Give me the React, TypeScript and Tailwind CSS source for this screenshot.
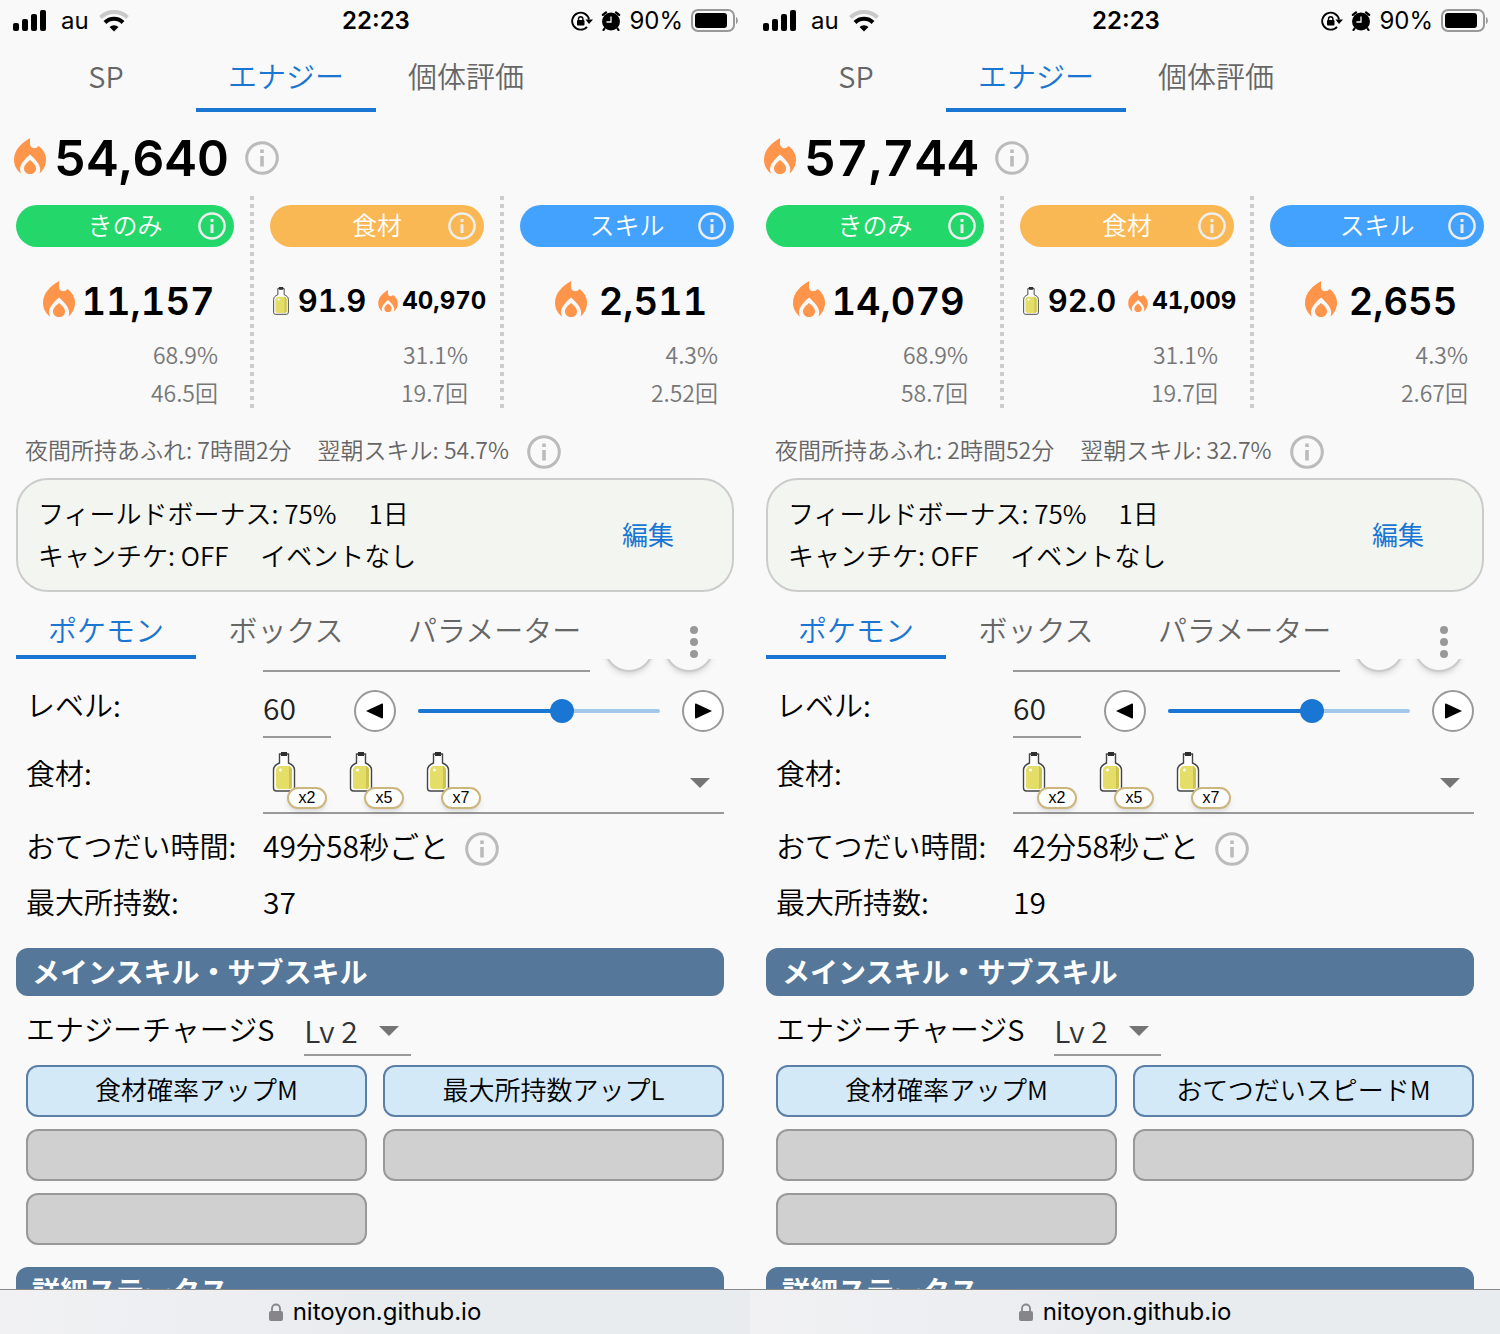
import { useState } from 'react'
import type { ReactNode } from 'react'

type Stat = {
  label: string
  color: string
  gap: string
  value: string
  percent: string
  count: string
  energy?: string
}

type Result = {
  id: string
  total: string
  stats: Stat[]
  night: string
  morning: string
  frequency: string
  capacity: string
  subSkills: string[]
}

const results: Result[] = [
  {
    id: 'left',
    total: '54,640',
    stats: [
      { label: 'きのみ', color: 'bg-[#24d76a]', gap: 'gap-1.5', value: '11,157', percent: '68.9%', count: '46.5回' },
      { label: '食材', color: 'bg-[#fab855]', gap: '', value: '91.9', energy: '40,970', percent: '31.1%', count: '19.7回' },
      { label: 'スキル', color: 'bg-[#44a2ff]', gap: 'gap-3', value: '2,511', percent: '4.3%', count: '2.52回' },
    ],
    night: '7時間2分',
    morning: '54.7%',
    frequency: '49分58秒ごと',
    capacity: '37',
    subSkills: ['食材確率アップM', '最大所持数アップL', '', '', ''],
  },
  {
    id: 'right',
    total: '57,744',
    stats: [
      { label: 'きのみ', color: 'bg-[#24d76a]', gap: 'gap-1.5', value: '14,079', percent: '68.9%', count: '58.7回' },
      { label: '食材', color: 'bg-[#fab855]', gap: '', value: '92.0', energy: '41,009', percent: '31.1%', count: '19.7回' },
      { label: 'スキル', color: 'bg-[#44a2ff]', gap: 'gap-3', value: '2,655', percent: '4.3%', count: '2.67回' },
    ],
    night: '2時間52分',
    morning: '32.7%',
    frequency: '42分58秒ごと',
    capacity: '19',
    subSkills: ['食材確率アップM', 'おてつだいスピードM', '', '', ''],
  },
]

const Flame = ({ className }: { className: string }) => (
  <svg viewBox="0 0 32 36" className={className} fill="#ff944b" aria-hidden="true">
    <path d="M16 0C16 4 15.800 6 16.500 8c1.500 2.800 5.500 3.200 8 0C29 11.500 32 16 32 21.500c0 6-2.500 10.500-6.500 14C28.500 28 22 22 16 16.500 10 22 3.500 28 7 35.500 2.500 32 0 27.500 0 21.500 0 11.500 8 5 16 0Z" />
    <path d="M16 22c3 2.500 6 5 6 8.500 0 3.500-2.700 5.500-6 5.500s-6-2-6-5.500C10 27 13 24.500 16 22Z" />
  </svg>
)

const Bottle = ({ className }: { className: string }) => (
  <svg viewBox="0 0 24 40" className={className} aria-hidden="true">
    <path d="M7.500 2v9C4 12.500 1.500 14 1.500 18v18c0 2 1 3 3 3h15c2 0 3-1 3-3V18c0-4-2.500-5.500-6-7V2Z" fill="#fff" stroke="#444" strokeWidth="1.400" />
    <path d="M7 14h10c2 1 3 2 3 4v16c0 2-1 3-3 3H7c-2 0-3-1-3-3V18c0-2 1-3 3-4Z" fill="#e4de68" />
    <path d="M17 14c2 1 3 2 3 4v16c0 2-1 3-3 3Z" fill="#cdc452" />
    <path d="M9 0h6v4H9Z" fill="#2f2f2f" />
    <circle cx="8.500" cy="18" r="1.500" fill="#fff" />
  </svg>
)

const InfoButton = ({ className }: { className: string }) => (
  <button type="button" aria-label="info" className={className}>
    <svg viewBox="0 0 34 34" className="size-full" fill="none" stroke="currentColor">
      <circle cx="17" cy="17" r="15.300" strokeWidth="3" />
      <path d="M17 15v10.500M17 8.500v3.500" strokeWidth="3.600" />
    </svg>
  </button>
)

const Caret = () => (
  <svg viewBox="0 0 20 10" className="h-[10px] w-5 shrink-0" fill="#757575" aria-hidden="true">
    <path d="M0 0h20L10 10Z" />
  </svg>
)

const StatusBar = () => (
  <div className="grid h-10 grid-cols-3 items-center pt-0.5 pr-[11px] pl-[13px] font-['Inter',sans-serif] text-2xl font-normal text-black">
    <div className="flex items-center gap-[10px]">
      <svg viewBox="0 0 34 22" className="h-[22px] w-[34px]" aria-hidden="true">
        <rect x="0" y="13" width="6" height="8" rx="2" />
        <rect x="9" y="9" width="6" height="12" rx="2" />
        <rect x="18" y="4" width="6" height="17" rx="2" />
        <rect x="27" y="0" width="6" height="21" rx="2" />
      </svg>
      <span className="pl-1">au</span>
      <svg viewBox="0 0 30 22" className="h-[22px] w-[30px]" fill="none" aria-hidden="true">
        <path d="M1.500 7.500a19.500 19.500 0 0 1 27 0" stroke="#c9c9c9" strokeWidth="4" />
        <path d="M6 12.500a12.500 12.500 0 0 1 18 0" stroke="#000" strokeWidth="4" />
        <path d="M10.500 17a7 7 0 0 1 9 0L15 21.500Z" fill="#000" />
      </svg>
    </div>
    <time className="text-center font-semibold">22:23</time>
    <div className="flex items-center justify-end gap-2">
      <svg viewBox="0 0 22 20" className="h-5 w-[22px]" fill="none" stroke="#000" aria-hidden="true">
        <path d="M16 15.800A8.500 8.500 0 1 1 18 8.500" strokeWidth="1.900" />
        <path d="M14.500 8.500h7.500L18 13Z" fill="#000" stroke="none" />
        <rect x="6" y="9" width="7.500" height="5.500" rx="1" fill="#000" stroke="none" />
        <path d="M7.500 9.500V8a2.200 2.200 0 0 1 4.400 0v1.500" strokeWidth="1.400" />
      </svg>
      <svg viewBox="0 0 20 20" className="size-5" aria-hidden="true">
        <circle cx="10" cy="10.500" r="9" />
        <path d="M1.800 3.800 5 1.500M18.200 3.800 15 1.500M3.500 17.500l-1 1.500M16.500 17.500l1 1.500" stroke="#000" strokeWidth="2.200" strokeLinecap="round" />
        <path d="M10 5.500V11H5.500" fill="none" stroke="#f9f9f9" strokeWidth="1.300" />
      </svg>
      <span>90%</span>
      <svg viewBox="0 0 48 24" className="h-6 w-12" fill="none" aria-hidden="true">
        <rect x="1" y="1" width="42" height="21" rx="6" stroke="#999" strokeWidth="2" />
        <rect x="4" y="4" width="32" height="15" rx="3" fill="#000" />
        <path d="M45 8c2.500 1 2.500 6 0 7Z" fill="#999" />
      </svg>
    </div>
  </div>
)

const Tab = ({ active, onClick, children }: { active: boolean; onClick: () => void; children: ReactNode }) => (
  <button
    type="button"
    role="tab"
    aria-selected={active}
    onClick={onClick}
    className={
      active
        ? 'min-w-[180px] border-b-4 border-[#1976d2] px-8 pt-1 text-[#1976d2]'
        : 'min-w-[180px] border-b-4 border-transparent px-8 pt-1 text-[#666]'
    }
  >
    {children}
  </button>
)

const StatColumn = ({ stat }: { stat: Stat }) => (
  <div className="flex min-w-0 flex-1 basis-0">
    {stat.label !== 'きのみ' && (
      <div className="w-1 shrink-0 bg-[repeating-linear-gradient(#ccc_0_4px,transparent_4px_8px)]" />
    )}
    <div className="min-w-0 flex-1 px-4 pt-[9px]">
      <div className={`flex h-[42px] items-center rounded-full text-[25px] text-white ${stat.color}`}>
        <span className="flex-1 pb-0.5 pl-9 text-center">{stat.label}</span>
        <InfoButton className="mr-2 size-7 text-[#eee]" />
      </div>
      {stat.energy ? (
        <div className="mt-5 flex h-[68px] items-center justify-center pl-1 font-['Inter',sans-serif] font-semibold text-black tabular-nums">
          <Bottle className="h-7 w-[18px] shrink-0" />
          <span className="ml-2 text-[31px]">{stat.value}</span>
          <Flame className="ml-3 h-[22px] w-5 shrink-0" />
          <span className="ml-1 text-2xl font-bold">{stat.energy}</span>
        </div>
      ) : (
        <div className={`mt-5 flex h-[68px] items-center justify-center pl-2 font-['Inter',sans-serif] text-[38px] font-semibold text-black tabular-nums ${stat.gap}`}>
          <Flame className="mb-1 h-9 w-8 shrink-0" />
          <span>{stat.value}</span>
        </div>
      )}
      <div className="pr-4 text-right text-[23px] leading-[38px] text-[#777]">
        <p>{stat.percent}</p>
        <p>{stat.count}</p>
      </div>
    </div>
  </div>
)

const Phone = ({ result }: { result: Result }) => {
  const [page, setPage] = useState('エナジー')
  const [tab, setTab] = useState('ポケモン')
  const [level, setLevel] = useState(60)
  const percent = ((level - 1) / 99) * 100

  const changeLevel = (value: number) => {
    if (value >= 1 && value <= 100) {
      setLevel(value)
    }
  }

  return (
    <section className="flex h-full min-w-0 flex-col overflow-hidden bg-[#f9f9f9]">
      <StatusBar />

      <div role="tablist" className="flex h-[72px] px-4 text-[29px]">
        {['SP', 'エナジー', '個体評価'].map((name) => (
          <Tab key={name} active={page === name} onClick={() => setPage(name)}>{name}</Tab>
        ))}
      </div>

      <div className="flex h-[84px] items-center px-[14px] pt-2">
        <Flame className="mb-1 h-9 w-8" />
        <span className="ml-2 font-['Inter',sans-serif] text-[50px] font-semibold text-black tabular-nums">{result.total}</span>
        <InfoButton className="ml-4 size-[34px] text-[#bbb]" />
      </div>

      <div className="flex h-[214px]">
        {result.stats.map((stat) => (
          <StatColumn key={stat.label} stat={stat} />
        ))}
      </div>

      <div className="mt-[18px] mb-0.5 flex h-12 items-center px-[25px] text-[23px] text-[#666]">
        <span className="pb-1.5">夜間所持あふれ: {result.night}</span>
        <span className="ml-[26px] pb-1.5">翌朝スキル: {result.morning}</span>
        <InfoButton className="ml-[18px] size-[34px] text-[#bbb]" />
      </div>

      <div className="mx-4 flex items-center justify-between rounded-4xl border-2 border-[#ccc] bg-[#f3f5f0] pt-3 pr-[58px] pb-[14px] pl-5 text-[26px] leading-[42px] text-black">
        <div>
          <p>フィールドボーナス: 75%<span className="ml-8">1日</span></p>
          <p>キャンチケ: OFF<span className="ml-8">イベントなし</span></p>
        </div>
        <button type="button" className="font-normal text-[#1976d2]">編集</button>
      </div>

      <div className="mt-2 flex h-[59px] items-stretch justify-between pr-[52px] pl-4">
        <div role="tablist" className="flex text-[29px]">
          {['ポケモン', 'ボックス', 'パラメーター'].map((name) => (
            <Tab key={name} active={tab === name} onClick={() => setTab(name)}>{name}</Tab>
          ))}
        </div>
        <button type="button" aria-label="menu" className="self-end">
          <svg viewBox="0 0 8 34" className="h-[34px] w-2" fill="#999">
            <circle cx="4" cy="5" r="4" />
            <circle cx="4" cy="17" r="4" />
            <circle cx="4" cy="29" r="4" />
          </svg>
        </button>
      </div>

      {/* scrolled list */}
      <div className="min-h-0 flex-1 overflow-hidden text-[29px] text-black">
        <div className="flex h-[13px] items-end pr-[36px] pl-[263px]">
          <div className="mr-[14px] h-10 flex-1 border-b-2 border-[#999]" />
          <button type="button" aria-label="search" className="mr-[10px] size-[50px] shrink-0 rounded-full border-2 border-[#ccc] bg-[#f9f9f9] shadow-md" />
          <button type="button" aria-label="edit" className="size-[50px] shrink-0 rounded-full border-2 border-[#ccc] bg-[#f9f9f9] shadow-md" />
        </div>

        <div className="flex h-[66px] px-[26px]">
          <label htmlFor={`level-${result.id}`} className="flex w-[237px] shrink-0 items-center">レベル:</label>
          <input
            id={`level-${result.id}`}
            type="text"
            value={level}
            onChange={(e) => changeLevel(Number(e.target.value))}
            className="w-[68px] border-b-2 border-[#999] pt-1.5 text-[30px] text-[#222] outline-none"
          />
          <div className="ml-[23px] flex min-w-0 flex-1 items-center pt-3">
            <button
              type="button"
              aria-label="level down"
              onClick={() => changeLevel(level - 1)}
              className="flex size-[42px] shrink-0 items-center justify-center rounded-full border-2 border-[#999] bg-white"
            >
              <svg viewBox="0 0 18 16" className="h-4 w-[18px]"><path d="M0 8 16 .5q1-.3 1 1v13q0 1.300-1 1Z" /></svg>
            </button>
            <div className="relative mx-[22px] h-1 flex-1 rounded-full bg-[#a4c7ec]">
              <div className="h-1 rounded-full bg-[#1976d2]" style={{ width: `${percent}%` }} />
              <input
                type="range"
                aria-label="レベル"
                min={1}
                max={100}
                value={level}
                onChange={(e) => changeLevel(Number(e.target.value))}
                className="absolute -inset-x-3 -top-[10px] h-6 appearance-none bg-transparent [&::-webkit-slider-thumb]:size-6 [&::-webkit-slider-thumb]:appearance-none [&::-webkit-slider-thumb]:rounded-full [&::-webkit-slider-thumb]:bg-[#1976d2]"
              />
            </div>
            <button
              type="button"
              aria-label="level up"
              onClick={() => changeLevel(level + 1)}
              className="flex size-[42px] shrink-0 items-center justify-center rounded-full border-2 border-[#999] bg-white"
            >
              <svg viewBox="0 0 18 16" className="h-4 w-[18px]"><path d="M18 8 2 .5q-1-.3-1 1v13q0 1.300 1 1Z" /></svg>
            </button>
          </div>
        </div>

        <div className="flex h-[76px] px-[26px]">
          <span className="flex w-[237px] shrink-0 items-center pb-1.5">食材:</span>
          <button type="button" aria-haspopup="listbox" aria-label="食材" className="flex flex-1 items-end justify-between border-b-2 border-[#999] pr-[14px] pl-[9px]">
            <span className="flex gap-[53px]">
              {['x2', 'x5', 'x7'].map((amount) => (
                <span key={amount} className="relative h-[60px]">
                  <Bottle className="h-10 w-6" />
                  <span className="absolute top-[35px] left-[15px] flex h-[22px] w-10 items-center justify-center rounded-full border-2 border-[#cbb67d] bg-white font-['Liberation_Sans',sans-serif] text-base font-normal shadow-md">
                    {amount}
                  </span>
                </span>
              ))}
            </span>
            <span className="flex h-[34px] items-start"><Caret /></span>
          </button>
        </div>

        <dl>
          <div className="flex h-[66px] items-center px-[26px]">
            <dt className="w-[237px] pb-0.5">おてつだい時間:</dt>
            <dd className="flex items-center text-[30px]">
              <span className="pb-1">{result.frequency}</span>
              <InfoButton className="mt-1 ml-4 size-[34px] text-[#bbb]" />
            </dd>
          </div>
          <div className="flex h-[46px] items-center px-[26px]">
            <dt className="w-[237px] pb-0.5">最大所持数:</dt>
            <dd className="pb-1 text-[30px]">{result.capacity}</dd>
          </div>
        </dl>

        <h2 className="mt-[22px] mr-[26px] ml-4 flex h-12 items-center rounded-xl bg-[#579] px-4 pb-0.5 text-[28px] font-bold text-white">メインスキル・サブスキル</h2>

        <div className="flex h-[60px] px-[26px]">
          <label htmlFor={`skill-${result.id}`} className="flex items-center pt-1.5">エナジーチャージS</label>
          <div className="ml-[30px] flex w-[107px] items-center border-b-2 border-[#999] pt-3 pr-3">
            <select id={`skill-${result.id}`} className="min-w-0 flex-1 appearance-none pb-0.5 text-[30px] text-[#333] outline-none">
              <option>Lv 2</option>
            </select>
            <Caret />
          </div>
        </div>

        <div className="mx-[26px] mt-[9px] grid grid-cols-2 gap-x-4 gap-y-3">
          {result.subSkills.map((skill, i) => (
            <button
              key={i}
              type="button"
              aria-label={skill || 'empty'}
              className={
                skill
                  ? 'h-[52px] rounded-xl border-2 border-[#5b7fa6] bg-[#d4e9f8] pb-1.5 text-[26px]'
                  : 'h-[52px] rounded-xl border-2 border-[#999] bg-[#d0d0d0]'
              }
            >
              {skill}
            </button>
          ))}
        </div>

        <h2 className="mt-[22px] mr-[26px] ml-4 flex h-12 items-center rounded-xl bg-[#579] px-4 pb-0.5 text-[28px] font-bold text-white">詳細ステータス</h2>
      </div>

      <footer className="flex h-[45px] items-center justify-center gap-[10px] border-t border-[#888] bg-linear-to-r from-[#f1f1f3] via-[#e9ecef] to-[#e9ecef] font-['Inter',sans-serif] text-2xl font-normal text-black">
        <svg viewBox="0 0 14 18" className="h-[18px] w-[14px]" aria-hidden="true">
          <rect x="0" y="8" width="14" height="10" rx="2" fill="#85858a" />
          <path d="M3 9V5.500a4 4 0 0 1 8 0V9" fill="none" stroke="#85858a" strokeWidth="1.800" />
        </svg>
        <a href="https://nitoyon.github.io">nitoyon.github.io</a>
      </footer>
    </section>
  )
}

const App = () => {
  return (
    <main className="grid h-screen grid-cols-2 bg-[#f9f9f9] font-['Noto_Sans_CJK_JP',sans-serif] font-[350] whitespace-nowrap">
      {results.map((result) => (
        <Phone key={result.id} result={result} />
      ))}
    </main>
  )
}

export default App
